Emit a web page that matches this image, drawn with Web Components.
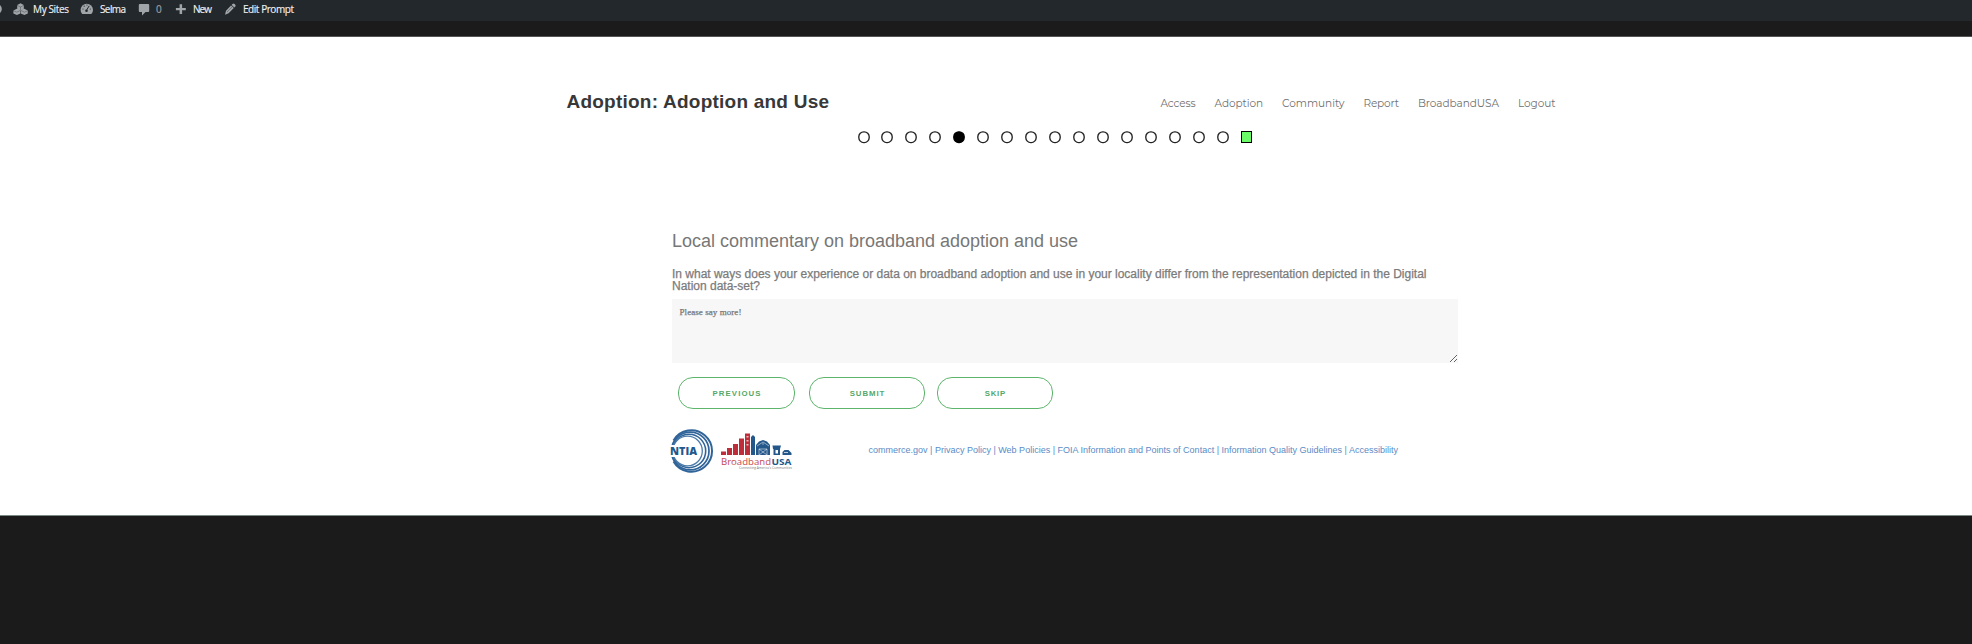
<!DOCTYPE html>
<html lang="en">
<head>
<meta charset="utf-8">
<title>Adoption: Adoption and Use</title>
<style>
html,body{margin:0;padding:0;height:644px;overflow:hidden;background:#1b1b1b}
body{font-family:"Liberation Sans",Arial,sans-serif}
</style>
</head>
<body>
<survey-page></survey-page>
<script>
const define = (name, html, ready) => customElements.define(name, class extends HTMLElement {
  connectedCallback() {
    if (this.shadowRoot) return;
    const t = document.createElement('template');
    t.innerHTML = html;
    this.attachShadow({mode: 'open'}).append(t.content.cloneNode(true));
    if (ready) ready(this);
  }
});

/* A line of text tracked out so it occupies its given width */
define('fit-text', `<style>
:host{display:block;white-space:nowrap;flex:none}
span{display:inline-block}
</style><span><slot></slot></span>`, el => {
  const w = +el.getAttribute('w'), s = el.shadowRoot.querySelector('span');
  const n = el.textContent.length;
  el.style.width = w + 'px';
  s.style.letterSpacing = '0px';
  const d = (w - s.getBoundingClientRect().width) / Math.max(1, n - 1);
  s.style.letterSpacing = d.toFixed(4) + 'px';
});

define('admin-bar', `<style>
:host{display:flex;height:21px;background:#23282d;font:10px/19px "Open Sans",sans-serif;overflow:hidden;color:#f0f0f1}
svg{flex:none;display:block;fill:#a0a5aa}
fit-text{-webkit-text-stroke:.15px currentColor}
.n{color:#9ca2a7}
</style>
<svg width="33" height="21"><circle cx="-3.4" cy="9" r="5.2"/>
<path d="M20.5 3.200l3.300 1.900v3.800l-3.300 1.600-3.300-1.600V5.100zM16.800 8.800l3.500 1.800v3l-3.400 1.400-3.500-1.500V10.500zM24.300 8.800l3.500 1.700v3l-3.400 1.500-3.600-1.400v-3z"/><path d="M20.500 7v3M17 5.200l3.500 1.800 3.500-1.800M13.500 10.700l3.200 1.500 3.500-1.600M21 10.600l3.500 1.600 3.300-1.600" fill="none" stroke="#23282d" stroke-width=".35"/></svg>
<fit-text w="36">My Sites</fit-text>
<svg width="31" height="21"><path d="M13.200 14a6.200 6.200 0 1 1 9.200 0z"/><path d="M17.300 10.500l2.900-4.600" stroke="#23282d" stroke-width="1"/><circle cx="17.500" cy="10.700" r="1.300" fill="#23282d"/><g fill="#23282d"><circle cx="14" cy="9" r=".6"/><circle cx="15.200" cy="6.200" r=".6"/><circle cx="18" cy="5" r=".6"/><circle cx="21.300" cy="9" r=".6"/></g></svg>
<fit-text w="26">Selma</fit-text>
<svg width="30" height="21"><path d="M13.800 4h8.400q1 0 1 1v6q0 1-1 1H19.500l-3.500 3.500V12h-2.200q-1 0-1-1V5q0-1 1-1z"/></svg>
<fit-text class="n" w="6">0</fit-text>
<svg width="31" height="21"><path d="M17.600 4.200h2.500v3.700h3.700v2.400h-3.700V14h-2.500v-3.700h-3.700V7.900h3.700z"/></svg>
<fit-text w="19">New</fit-text>
<svg width="31" height="21"><path d="M20.500 4q1-1 2 0l.8.800q.8.900 0 1.800l-.9.900-2.800-2.600zM19 5.500l2.800 2.600-5.200 5.200-3.600 1.400 1-3.900z"/><path d="M15 12l5.300-5.200" stroke="#596167" stroke-width=".7"/></svg>
<fit-text w="51">Edit Prompt</fit-text>`);

define('site-nav', `<style>
:host{display:flex;gap:19px;font:400 10.500px/14px Montserrat,Inter,sans-serif;color:#707070}
</style>
<fit-text w="35">Access</fit-text><fit-text w="48.500">Adoption</fit-text><fit-text w="62.500">Community</fit-text><fit-text w="35.500">Report</fit-text><fit-text w="81">BroadbandUSA</fit-text><fit-text w="37.500">Logout</fit-text>`);

define('progress-dots', `<style>
:host{display:flex}
svg{display:block;flex:none;width:12px;height:13px;margin-right:11.950px}
i{box-sizing:border-box;flex:none;width:11px;height:12px;border:1px solid #000;background:#6cfb68}
</style>`, el => {
  let dots = '';
  for (let k = 0; k < 16; k++) {
    dots += `<svg viewBox="0 0 12 13"><rect x=".8" y=".8" width="10.400" height="10.800" rx="5" fill="${k === 4 ? '#000' : '#fff'}" stroke="${k === 4 ? '#000' : '#222'}" stroke-width="1.350"/></svg>`;
  }
  const t = document.createElement('template');
  t.innerHTML = dots + '<i></i>';
  el.shadowRoot.append(t.content);
});

define('pill-button', `<style>
:host{display:block;flex:none}
button{box-sizing:border-box;display:flex;align-items:center;justify-content:center;width:100%;height:32px;border:1px solid #5db56c;border-radius:15px;background:#fff;padding:1px 0 0;color:#55a868;font:bold 7.800px/10px "Liberation Sans",sans-serif}
</style><button><slot></slot></button>`);

define('comment-box', `<style>
:host{display:block;width:786px;height:64px}
textarea{box-sizing:border-box;display:block;width:786px;height:64px;margin:0;border:0;background:#f7f7f7;padding:7px 7.500px;font:9px/12px "Liberation Serif",serif;letter-spacing:.06px;resize:vertical;outline:0}
textarea::placeholder{color:#777;opacity:1;-webkit-text-stroke:.25px #777}
</style><textarea placeholder="Please say more!"></textarea>`);

define('ntia-logo', `<style>:host{display:block;flex:none}svg{display:block}</style>
<svg width="44" height="44" viewBox="0 0 44 44">
<g fill="none" stroke="#31659a">
<path d="M3.500 11.500A20.700 20.700 0 1 1 3.500 32.500" stroke-width="2"/>
<circle cx="20.200" cy="22" r="18.800" stroke-width="1.700"/>
<circle cx="19" cy="22" r="16.700" stroke-width="1.600"/>
<circle cx="17.500" cy="22" r="14.800" stroke="#4c7baa" stroke-width="1.300"/>
</g>
<path d="M0 16h28v12H0z" fill="#fff"/>
<text x="0" y="26" fill="#24578b" font-family="Open Sans,sans-serif" font-weight="800" font-size="10.500" textLength="27" lengthAdjust="spacingAndGlyphs">NTIA</text>
</svg>`);

define('broadband-logo', `<style>:host{display:block;flex:none}svg{display:block;overflow:visible}text{font-family:"Open Sans",sans-serif}</style>
<svg width="71" height="38" viewBox="0 0 71 38">
<g fill="#be2d3a"><path d="M0 18.500h5V22H0zM6 15h5v7H6zM12 11h5v11h-5zM18 5.500h5V22h-5zM24 .5h5V22h-5z"/></g>
<path d="M25.500 3h2v1.500h-2zM25.500 7h2v1.500h-2zM25.500 11h2v1.500h-2z" fill="#efb9be"/>
<path d="M30 4l2-2 2 2v18h-4zM35 22V12l3-3.500 4-1.500 4 1.500 3 3.500V22z" fill="#24588a"/>
<path d="M36 13l6-4 6 4M38 22v-6h8v6M38 16l8 6M46 16l-8 6M42 10v2" stroke="#fff" fill="none" stroke-width=".5"/>
<path d="M51.500 12.500h8.500l-1 3.500h-7zM52.500 16H59v6h-6.500zM61.500 19l2-2h4l3 3v2h-9z" fill="#24588a"/>
<path d="M54.500 17h2.500v3.500h-2.500z" fill="#fff"/><path d="M63 19.500h4" stroke="#fff" stroke-width=".7" fill="none"/>
<text x="0" y="31.700" font-size="9.500" fill="#c64650" textLength="50" lengthAdjust="spacingAndGlyphs">Broadband</text>
<text x="50.500" y="31.700" font-size="9.500" font-weight="bold" fill="#24588a" textLength="20" lengthAdjust="spacingAndGlyphs">USA</text>
<text x="18" y="35.800" font-size="3.200" fill="#777" textLength="53" lengthAdjust="spacingAndGlyphs">Connecting America's Communities</text>
</svg>`);

define('survey-page', `<style>
:host{display:block;width:1972px;height:644px;background:#1b1b1b}
main{box-sizing:border-box;margin-top:15px;height:480px;background:#fff;border-top:1px solid #555;border-bottom:1px solid #7c8883;padding-top:53px}
header{display:flex;height:41px;margin-left:566.500px}
h1{margin:0;font:bold 19px/24px "Liberation Sans",sans-serif;color:#383838;width:594px}
site-nav{margin-top:7px}
progress-dots{margin-left:857.500px;height:12px}
section{margin:87px 0 0 672px;width:786px}
h2{margin:0;font:normal 18px/22px "Liberation Sans",sans-serif;color:#777}
.q{font:12px/12px "Liberation Sans",sans-serif;color:#7b7b7b;-webkit-text-stroke:.25px #7b7b7b;margin-top:16px;height:25px}
comment-box{margin-top:6px}
.b{display:flex;margin:14px 0 0 6px}
.b pill-button{width:117px}
footer{display:flex;margin:20px 0 0 -2px}
broadband-logo{margin:4px 76.500px 0 7px}
.l{color:#5a8bc6;font:9px/12px "Liberation Sans",sans-serif;margin-top:15px}
</style>
<admin-bar></admin-bar>
<main>
<header><h1><fit-text w="262.500">Adoption: Adoption and Use</fit-text></h1><site-nav></site-nav></header>
<progress-dots></progress-dots>
<section>
<h2><fit-text w="406">Local commentary on broadband adoption and use</fit-text></h2>
<div class="q"><fit-text w="754.500">In what ways does your experience or data on broadband adoption and use in your locality differ from the representation depicted in the Digital</fit-text><fit-text w="88">Nation data-set?</fit-text></div>
<comment-box></comment-box>
<div class="b"><pill-button><fit-text w="48">PREVIOUS</fit-text></pill-button><pill-button style="margin:0 12px 0 14px;width:116px"><fit-text w="34.500">SUBMIT</fit-text></pill-button><pill-button style="width:116px"><fit-text w="20.500">SKIP</fit-text></pill-button></div>
<footer><ntia-logo></ntia-logo><broadband-logo></broadband-logo><fit-text class="l" w="529.500">commerce.gov | Privacy Policy | Web Policies | FOIA Information and Points of Contact | Information Quality Guidelines | Accessibility</fit-text></footer>
</section>
</main>`);
</script>
</body>
</html>
